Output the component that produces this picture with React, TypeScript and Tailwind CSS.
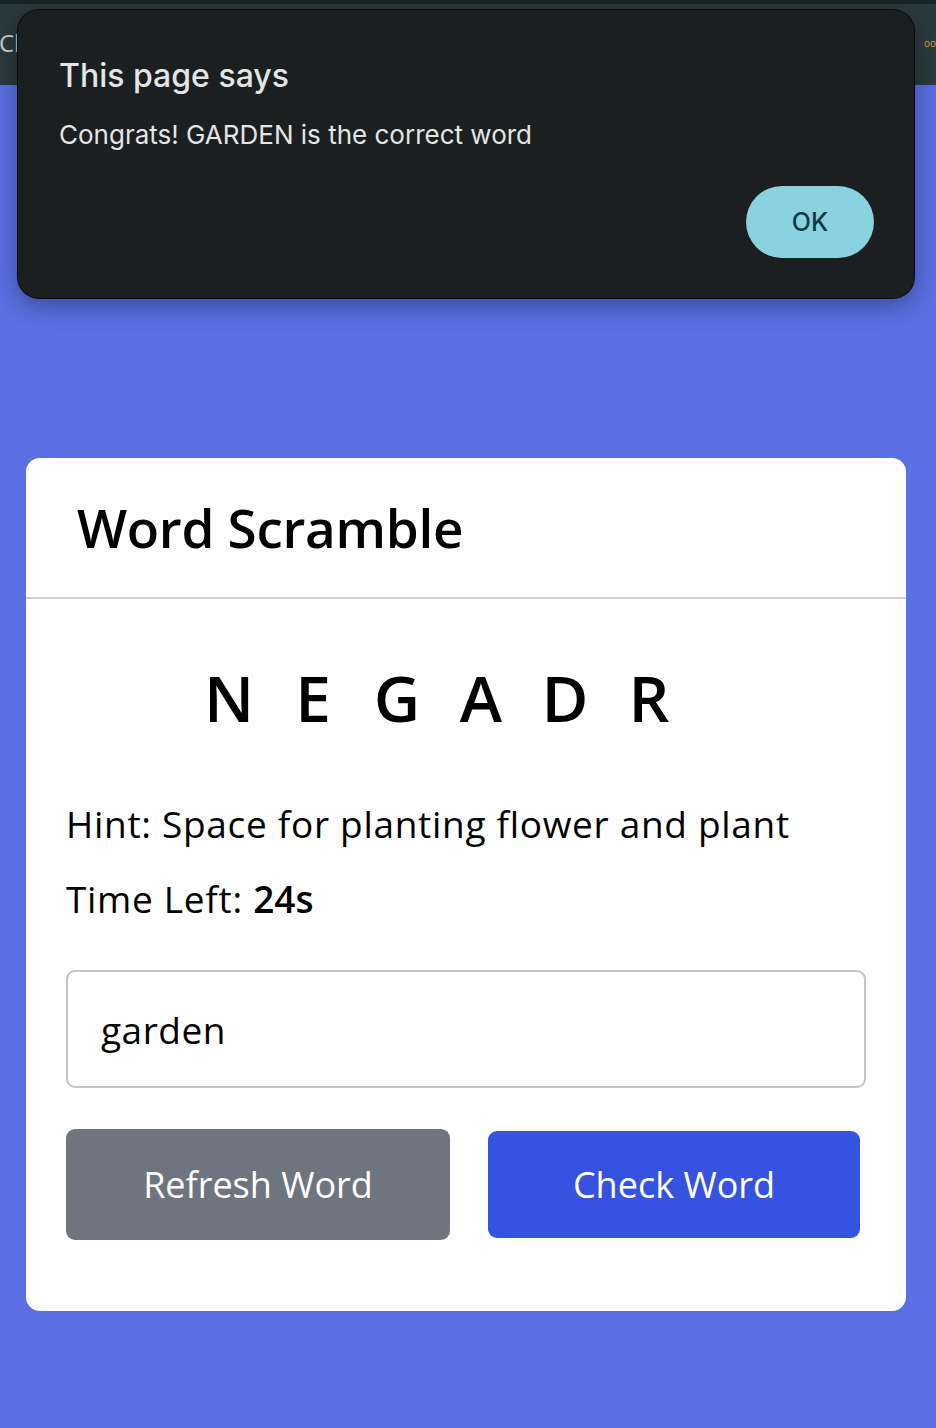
import { useState } from 'react'

const letters = ['N', 'E', 'G', 'A', 'D', 'R']

function AlertDialog() {
  return (
    <div className="absolute left-[17px] top-[9px] h-[290px] w-[898px] rounded-[22px] border border-black/60 bg-[#1b1f20] shadow-[0_6px_24px_rgba(0,0,0,0.35)] font-['Inter',sans-serif]">
      <p className="absolute left-[41px] top-[50px] text-[32px] font-medium leading-none text-[#e3e5e6]">This page says</p>
      <p className="absolute left-[41px] top-[112px] text-[26px] leading-none text-[#e3e5e6]">
        Congrats! GARDEN is the correct word
      </p>
      <button className="absolute right-[40px] top-[176px] flex h-[72px] w-[128px] items-center justify-center rounded-full bg-[#89d3e0] pt-[2px] text-[25px] font-medium text-[#0f3b44]">
        OK
      </button>
    </div>
  )
}

export default function App() {
  const [guess, setGuess] = useState('garden')

  return (
    <div className="relative min-h-[1428px] bg-[#5a70e3] font-['Open_Sans',sans-serif]">
      <div className="h-[85px] border-t-[4px] border-[#172529] bg-[#2b3a3e]">
        <div className="flex h-full items-center justify-between pb-[4px]">
          <span className="-ml-[1px] text-[24px] leading-none text-[#c9d0d2]">Cl</span>
          <span className="text-[10px] leading-none text-[#d9a441]">oo</span>
        </div>
      </div>

      <div className="pl-[26px] pt-[373px] pb-[118px]">
        <div className="w-[880px] rounded-[14px] bg-white text-black">
          <div className="flex h-[141px] items-center border-b-2 border-[#cfcfcf] pl-[51px]">
            <h1 className="text-[53px] font-semibold leading-none tracking-[-0.3px]">Word Scramble</h1>
          </div>

          <div className="px-[40px] pt-[67px] pb-[71px]">
            <div className="flex justify-center pr-[54px]">
              {letters.map((l, i) => (
                <span key={i} className="w-[84px] text-center text-[64px] font-semibold leading-none">
                  {l}
                </span>
              ))}
            </div>

            <p className="mt-[75px] text-[37px] leading-none tracking-[0.7px]">Hint: Space for planting flower and plant</p>
            <p className="mt-[38px] text-[37px] leading-none tracking-[0.7px]">
              Time Left: <span className="font-semibold tracking-normal">24s</span>
            </p>

            <input
              value={guess}
              onChange={(e) => setGuess(e.target.value)}
              className="mt-[53px] block h-[118px] w-[800px] rounded-[9px] border-2 border-[#c4c4c4] px-[33px] text-[37px] tracking-[0.5px] text-black outline-none"
            />

            <div className="mt-[41px] flex items-center justify-between pr-[6px]">
              <button className="h-[111px] w-[384px] rounded-[9px] bg-[#6f757e] text-[36px] text-white">Refresh Word</button>
              <button className="h-[107px] w-[372px] rounded-[9px] bg-[#3652e1] text-[36px] text-white">Check Word</button>
            </div>
          </div>
        </div>
      </div>

      <AlertDialog />
    </div>
  )
}
